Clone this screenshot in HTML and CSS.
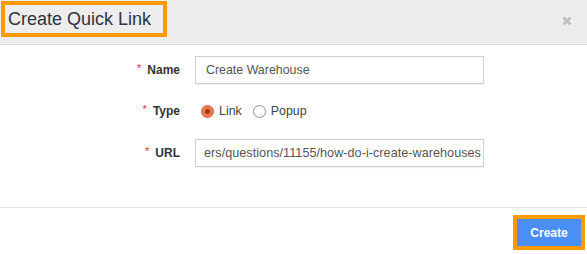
FILE: index.html
```html
<!DOCTYPE html>
<html>
<head>
<meta charset="utf-8">
<link rel="stylesheet" href="styles.css">
</head>
<body>
<div class="modal">
  <div class="header">
    <div class="title">Create Quick Link</div>
    <svg class="close" width="10" height="10" viewBox="0 0 10 10"><path d="M1.5 1.5 L8.5 8.5 M8.5 1.5 L1.5 8.5" stroke="#bdbdbd" stroke-width="2.6" stroke-linecap="butt"/></svg>
  </div>
  <div class="body">
    <div class="row">
      <label class="label"><span class="req">*</span>Name</label>
      <div class="input">Create Warehouse</div>
    </div>
    <div class="row">
      <label class="label"><span class="req">*</span>Type</label>
      <div class="radios">
        <span class="radio checked"></span><span class="rtext">Link</span>
        <span class="radio"></span><span class="rtext">Popup</span>
      </div>
    </div>
    <div class="row">
      <label class="label"><span class="req">*</span>URL</label>
      <div class="input url">ers/questions/11155/how-do-i-create-warehouses</div>
    </div>
  </div>
  <div class="footer">
    <button class="btn">Create</button>
  </div>
</div>
</body>
</html>
```
FILE: styles.css
```css
* { box-sizing: border-box; }
html, body { margin: 0; padding: 0; background: #fff; }
body { font-family: "Liberation Sans", Arial, sans-serif; width: 587px; height: 254px; overflow: hidden; }
.modal { display: flex; flex-direction: column; height: 254px; }
.header {
  height: 45px;
  background: #ededed;
  border-bottom: 1px solid #d9d9d9;
  padding: 1px 0 0 1px;
  display: flex;
  align-items: flex-start;
  justify-content: space-between;
}
.title {
  border: 4px solid #ff9900;
  width: 166px;
  height: 36px;
  line-height: 28px;
  padding-left: 3px;
  font-size: 18px;
  color: #2e3442;
}
.close { margin: 15px 15px 0 0; }
.body {
  flex: 1;
  padding-top: 11px;
  display: flex;
  flex-direction: column;
  gap: 13px;
}
.row {
  display: grid;
  grid-template-columns: 180px 289px;
  column-gap: 15px;
  align-items: center;
  height: 28px;
}
.row:last-child { margin-top: 1px; }
.label {
  text-align: right;
  font-size: 12px;
  font-weight: bold;
  color: #333;
}
.req { color: #e0303a; font-weight: normal; font-size: 11px; margin-right: 6px; position: relative; top: -2px; }
.input {
  height: 28px;
  border: 1px solid #cfcfcf;
  box-shadow: 0 1px 1px rgba(0,0,0,0.06);
  font-size: 12.4px;
  color: #555;
  line-height: 26px;
  padding-left: 10px;
  white-space: nowrap;
  overflow: hidden;
}
.input.url { padding-left: 8px; font-size: 12.6px; letter-spacing: 0.05px; }
.radios { display: flex; align-items: center; padding-left: 6px; font-size: 12.4px; color: #444; }
.radio {
  width: 13px; height: 13px; border-radius: 50%;
  border: 1px solid #8f8f8f; background: #fff;
  display: inline-block; position: relative;
}
.radio.checked { background: #ec7a4e; border-color: #d46640; }
.radio.checked::after {
  content: ""; position: absolute; left: 3px; top: 3px;
  width: 5px; height: 5px; border-radius: 50%; background: #9c3a1c;
}
.rtext { margin-left: 5px; margin-right: 11px; }
.footer {
  height: 47px;
  border-top: 1px solid #e3e3e3;
  display: flex;
  justify-content: flex-end;
  align-items: flex-start;
  padding: 11px 6px 0 0;
}
.btn {
  width: 64px; height: 27px;
  background: #4a8ef7;
  border: none;
  outline: 4px solid #ff9900;
  color: #fff;
  font-family: "Liberation Sans", Arial, sans-serif;
  font-weight: bold;
  font-size: 12px;
  padding: 0;
}
```
